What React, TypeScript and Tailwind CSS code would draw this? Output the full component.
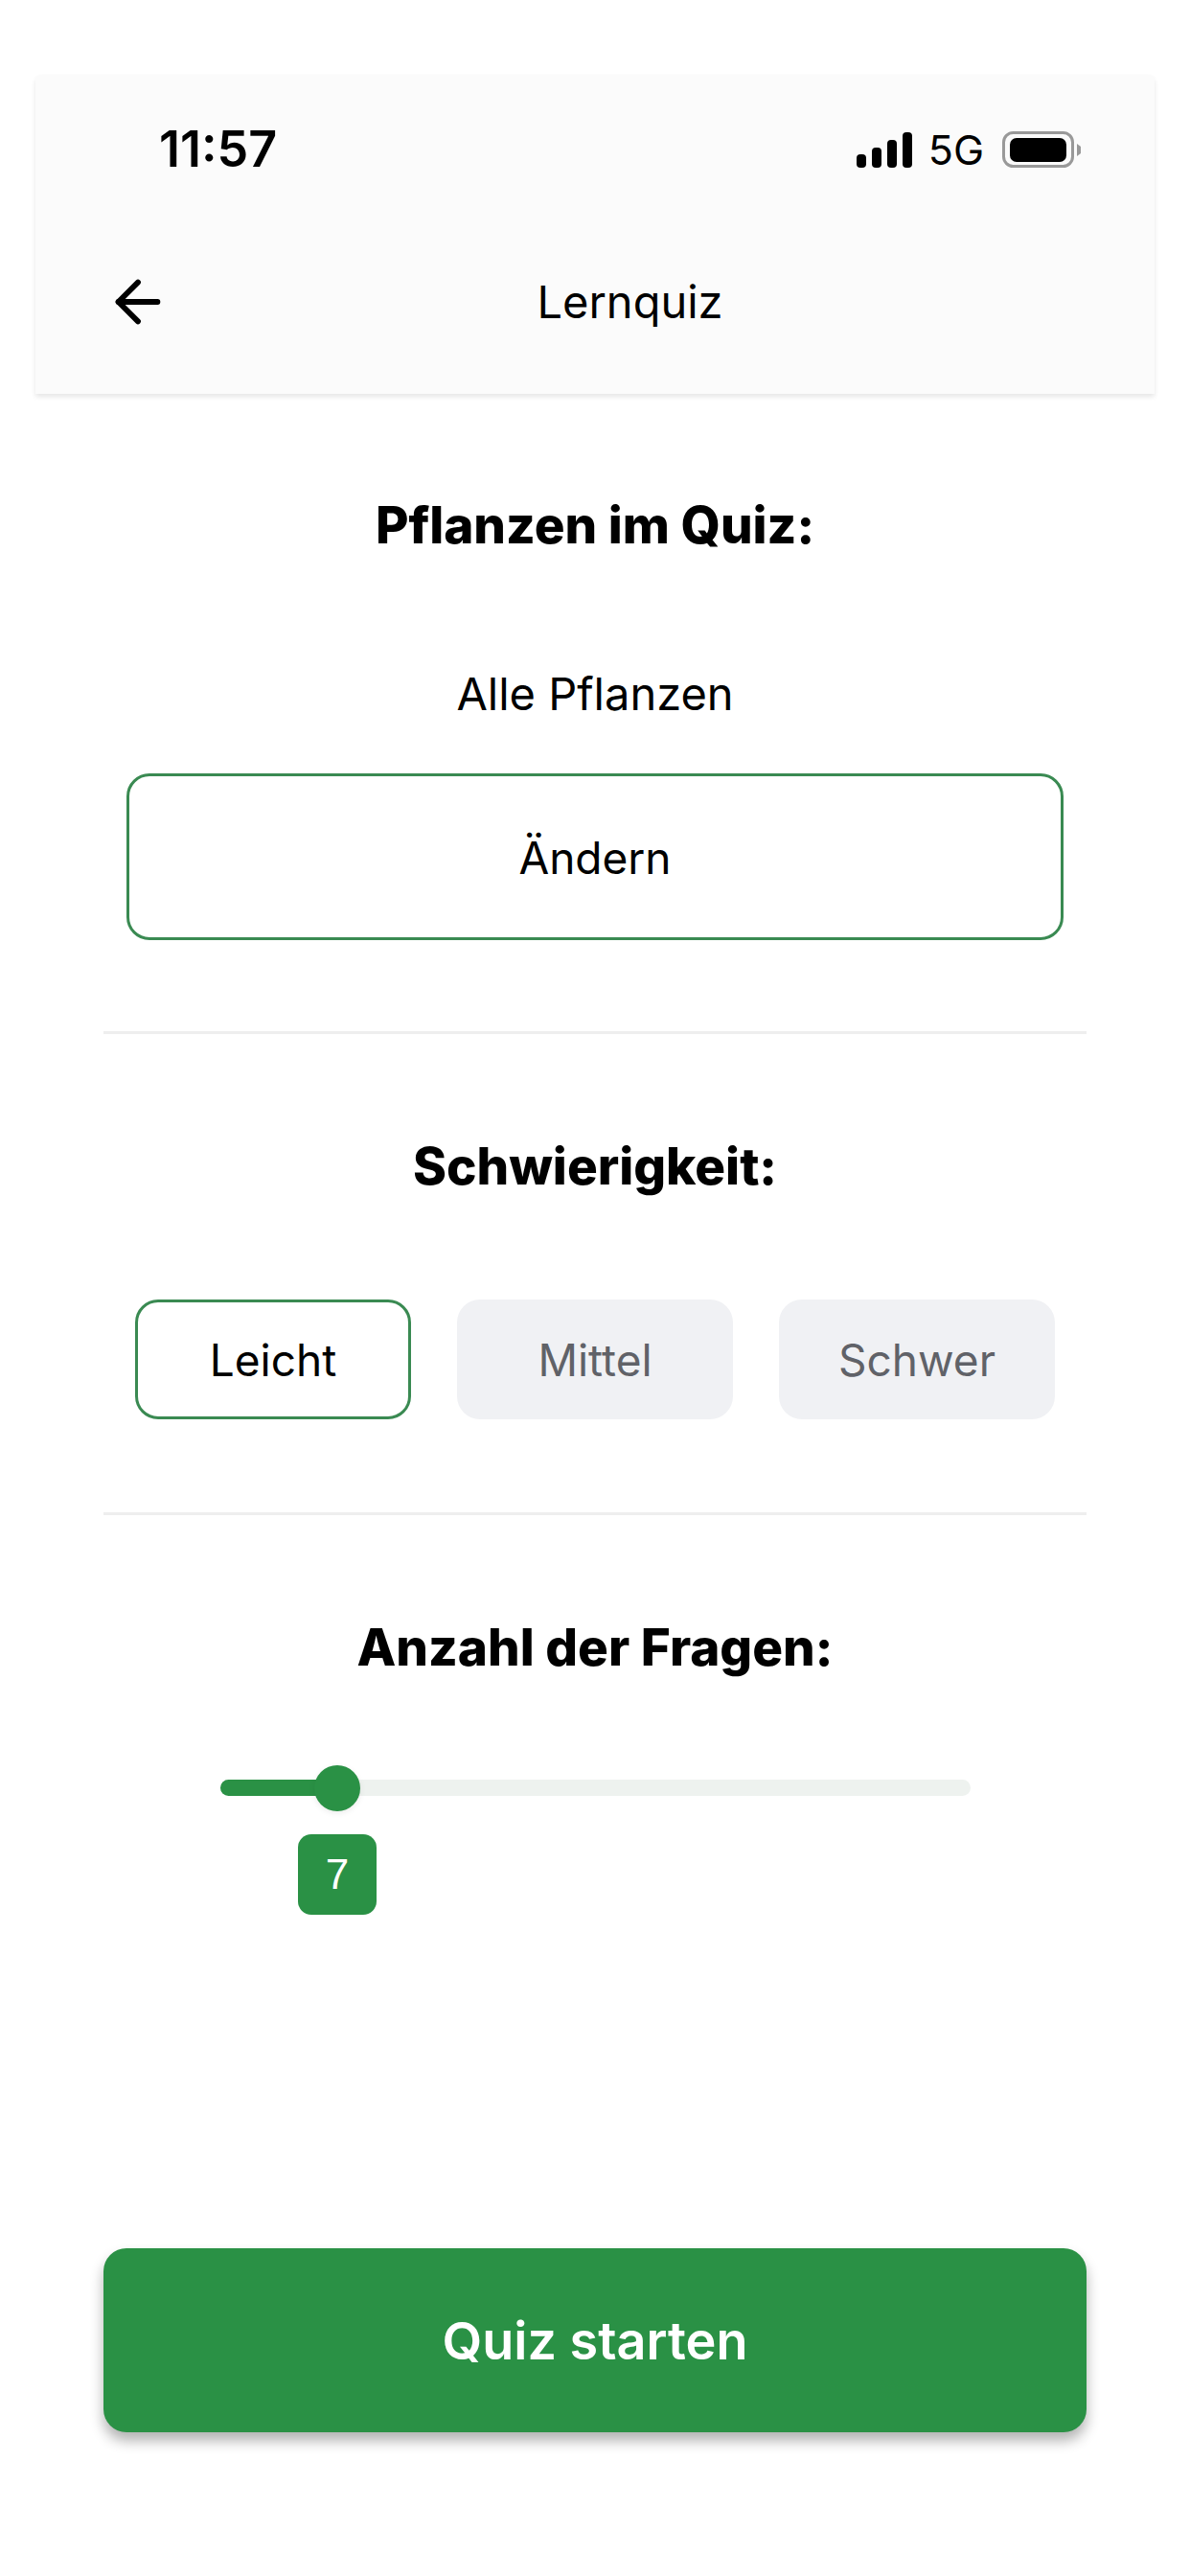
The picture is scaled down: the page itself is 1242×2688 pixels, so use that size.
import { ArrowLeft } from "lucide-react";

function StatusIcons() {
  return (
    <div className="flex items-center">
      {/* signal bars */}
      <svg width="58" height="37" viewBox="0 0 58 37" fill="#000" className="mr-[17px]">
        <rect x="0" y="23" width="10" height="14" rx="4" />
        <rect x="16" y="16" width="10" height="21" rx="4" />
        <rect x="32" y="8" width="10" height="29" rx="4" />
        <rect x="48" y="0" width="10" height="37" rx="4" />
      </svg>
      <span className="text-[43px] leading-none text-black mr-[19px]">5G</span>
      {/* battery */}
      <svg width="82" height="38" viewBox="0 0 82 38">
        <rect x="1.5" y="1.5" width="72" height="35" rx="10" fill="none" stroke="#999" strokeWidth="3" />
        <rect x="8" y="7" width="59" height="25" rx="7" fill="#000" />
        <path d="M78 13 l4 3 v7 l-4 3 z" fill="#999" />
      </svg>
    </div>
  );
}

function Divider() {
  return <div className="h-[3px] bg-[#eeeeee]" />;
}

export default function App() {
  const levels = [
    { label: "Leicht", active: true },
    { label: "Mittel", active: false },
    { label: "Schwer", active: false },
  ];

  return (
    <div className="w-[1242px] h-[2688px] bg-white text-black font-['Inter',sans-serif] pt-[78px] flex flex-col">
      {/* Header */}
      <header className="mx-[37px] h-[333px] bg-[#fbfbfb] rounded-t-[6px] shadow-[0_3px_5px_rgba(0,0,0,0.1)] flex flex-col">
        <div className="flex items-center justify-between pl-[129px] pr-[77px] pt-[52px]">
          <span className="text-[52px] leading-[52px] font-semibold">11:57</span>
          <StatusIcons />
        </div>
        <div className="flex items-center pl-[72px] mt-[98px]">
          <ArrowLeft size={70} strokeWidth={2} color="#000" />
          <h1 className="flex-1 text-center text-[47px] leading-[60px] font-normal ml-[2px]">Lernquiz</h1>
          <div className="w-[71px]" />
        </div>
      </header>

      <main className="flex-1 px-[108px] flex flex-col">
        {/* Plants */}
        <section className="pt-[107px]">
          <h2 className="text-center text-[53px] leading-[60px] font-extrabold">Pflanzen im Quiz:</h2>
          <p className="mt-[118px] text-center text-[47px] leading-[56px]">Alle Pflanzen</p>
          <button className="mt-[55px] mx-[24px] w-[978px] h-[174px] pt-[2px] border-[3px] border-[#3a8a52] rounded-[24px] text-[46px] text-black">
            Ändern
          </button>
        </section>
        <div className="mt-[95px]">
          <Divider />
        </div>

        {/* Difficulty */}
        <section className="pt-[108px]">
          <h2 className="text-center text-[53px] leading-[60px] font-extrabold">Schwierigkeit:</h2>
          <div className="mt-[109px] px-[33px] flex gap-[48px]">
            {levels.map((level) => (
              <button
                key={level.label}
                className={
                  level.active
                    ? "w-[288px] h-[125px] pt-[2px] rounded-[24px] border-[3px] border-[#3a8a52] text-[46px] text-black"
                    : "w-[288px] h-[125px] pt-[2px] rounded-[24px] bg-[#f0f1f4] text-[46px] text-[#606268]"
                }
              >
                {level.label}
              </button>
            ))}
          </div>
        </section>
        <div className="mt-[97px]">
          <Divider />
        </div>

        {/* Question count */}
        <section className="pt-[108px]">
          <h2 className="text-center text-[53px] leading-[60px] font-extrabold">Anzahl der Fragen:</h2>
          <div className="mt-[108px] ml-[122px] w-[783px] h-[17px] rounded-full bg-[#eef2ef] relative">
            <div className="h-full w-[121px] rounded-l-full bg-[#2a9145]" />
            <div className="absolute left-[98px] -top-[15px] w-[48px] h-[48px] rounded-full bg-[#2a9145] shadow-[0_2px_6px_rgba(0,0,0,0.08)]" />
          </div>
          <div className="mt-[40px] ml-[203px] w-[82px] h-[84px] rounded-[14px] bg-[#2a9145] text-white flex items-center justify-center text-[44px] font-['Liberation_Sans',sans-serif]">
            7
          </div>
        </section>

        {/* Start */}
        <button className="mt-[348px] w-[1026px] h-[192px] rounded-[24px] bg-[#2a9145] text-white text-[54px] font-semibold shadow-[0_9px_14px_rgba(0,0,0,0.3)]">
          Quiz starten
        </button>
      </main>
    </div>
  );
}
